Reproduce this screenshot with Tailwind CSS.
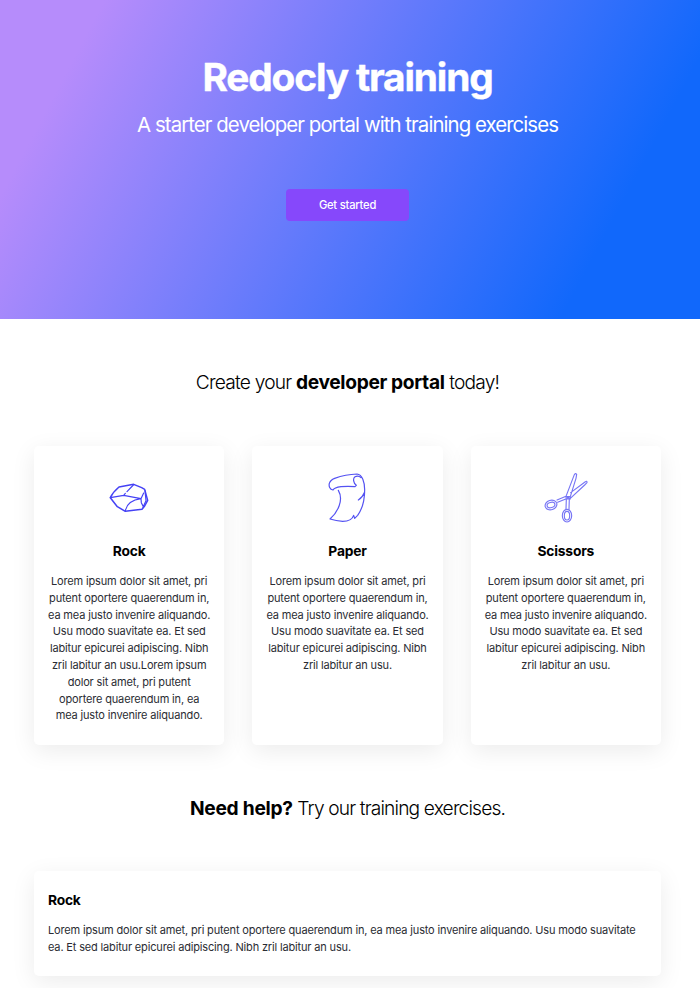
<!DOCTYPE html>
<html lang="en">
<head>
<meta charset="utf-8">
<title>Redocly training</title>
<script src="https://cdn.jsdelivr.net/npm/@tailwindcss/browser@4"></script>
</head>
<body class="h-[988px] overflow-hidden bg-white font-['Inter',sans-serif] text-black">
<header class="flex h-[319px] flex-col items-center bg-[linear-gradient(118deg,#b68cfb_12%,#1168fb_84%)] pr-[5px] pt-[53px] text-white">
  <h1 class="whitespace-nowrap text-[38.8px] font-bold leading-[48px] tracking-[-1.15px] [-webkit-text-stroke:0.4px_white]">Redocly training</h1>
  <p class="mt-[9px] whitespace-nowrap text-[20.4px] leading-[30px] tracking-[-0.93px]">A starter developer portal with training exercises</p>
  <a class="mt-[49px] flex h-[32px] w-[123px] items-center justify-center rounded-[4px] bg-[#8648fb] text-[11.2px] font-medium tracking-[-0.22px]">Get started</a>
</header>
<main class="pl-[34px] pr-[39px]">
  <h2 class="mt-[48px] whitespace-nowrap text-center text-[19.2px] font-light leading-[30px] tracking-[-0.8px]">Create your <b class="font-bold tracking-[-0.35px]">developer portal</b> today!</h2>
  <section class="mt-[48.6px] grid grid-cols-3 gap-[28px]">
    <article class="flex h-[299px] flex-col items-center rounded-[5px] bg-white pt-[18px] text-center shadow-[0_6px_24px_rgba(0,0,0,0.08)]">
      <svg class="h-[66px] w-[60px]" viewBox="0 0 180 198" fill="none" stroke="#4542f5" stroke-width="3.5" stroke-linejoin="round" stroke-linecap="round"><path d="M34 101 Q42 84 60 69L104 61 128 71 137 76 146 109 137 126 129 136 79 142 55 128Z" stroke-width="4.5"/><path d="M34 101 74 94 126 104 134 87M74 94 79 88M84 83 103 63M126 104Q84 110 79 141M126 104 127 116 133 128M138 80 141 110 132 130"/></svg>
      <h3 class="mt-[11px] text-[13.8px] font-bold leading-[20px] tracking-[-0.2px]">Rock</h3>
      <p class="mt-[12.4px] whitespace-nowrap text-[11px] leading-[16.8px] tracking-[-0.16px] text-[#2a2c33]">Lorem ipsum dolor sit amet, pri<br>putent oportere quaerendum in,<br>ea mea justo invenire aliquando.<br>Usu modo suavitate ea. Et sed<br>labitur epicurei adipiscing. Nibh<br>zril labitur an usu.Lorem ipsum<br>dolor sit amet, pri putent<br>oportere quaerendum in, ea<br>mea justo invenire aliquando.</p>
    </article>
    <article class="flex h-[299px] flex-col items-center rounded-[5px] bg-white pt-[18px] text-center shadow-[0_6px_24px_rgba(0,0,0,0.08)]">
      <svg class="h-[66px] w-[60px]" viewBox="0 0 180 198" fill="none" stroke="#5452f2" stroke-width="3.6" stroke-linejoin="round" stroke-linecap="round"><path d="M48 78C38 76 35 66 37 58Q40 48 53 43Q86 31 120 30C136 31 143 55 143 77C143 103 137 133 122 154L113 163 110 154Q104 172 77 172Q57 171 39 165C62 145 81 108 64 79M48 78C53 68 85 65 114 68L118 64C109 58 107 43 114 38Q124 33 132 41M143 84Q137 100 124 108"/></svg>
      <h3 class="mt-[11px] text-[13.8px] font-bold leading-[20px] tracking-[-0.2px]">Paper</h3>
      <p class="mt-[12.4px] whitespace-nowrap text-[11px] leading-[16.8px] tracking-[-0.16px] text-[#2a2c33]">Lorem ipsum dolor sit amet, pri<br>putent oportere quaerendum in,<br>ea mea justo invenire aliquando.<br>Usu modo suavitate ea. Et sed<br>labitur epicurei adipiscing. Nibh<br>zril labitur an usu.</p>
    </article>
    <article class="flex h-[299px] flex-col items-center rounded-[5px] bg-white pt-[18px] text-center shadow-[0_6px_24px_rgba(0,0,0,0.08)]">
      <svg class="h-[66px] w-[60px]" viewBox="0 0 180 198" fill="none" stroke="#7775f5" stroke-width="3.4" stroke-linejoin="round" stroke-linecap="round"><path d="M90 97 115 32Q118 26 122 31L120 43 102 101M104 86 147 54Q154 49 153 56L146 63 103 103M90 97 63 108M91 104 65 115M91 105 90 135M100 103 99 136M90 97 102 98 103 105 91 105Z"/><ellipse cx="45" cy="123" rx="18" ry="14" transform="rotate(-18 45 123)"/><ellipse cx="45" cy="123" rx="12" ry="8" transform="rotate(-18 45 123)"/><ellipse cx="93" cy="155" rx="14" ry="19"/><ellipse cx="93" cy="155" rx="8" ry="13"/><circle cx="96" cy="101" r="2"/></svg>
      <h3 class="mt-[11px] text-[13.8px] font-bold leading-[20px] tracking-[-0.2px]">Scissors</h3>
      <p class="mt-[12.4px] whitespace-nowrap text-[11px] leading-[16.8px] tracking-[-0.16px] text-[#2a2c33]">Lorem ipsum dolor sit amet, pri<br>putent oportere quaerendum in,<br>ea mea justo invenire aliquando.<br>Usu modo suavitate ea. Et sed<br>labitur epicurei adipiscing. Nibh<br>zril labitur an usu.</p>
    </article>
  </section>
  <h2 class="mt-[48.9px] whitespace-nowrap text-center text-[19.2px] font-light leading-[30px] tracking-[-0.85px]"><b class="font-bold tracking-[-0.27px]">Need help?</b> Try our training exercises.</h2>
  <article class="mt-[47.5px] h-[105px] rounded-[5px] bg-white px-[14px] pt-[19px] shadow-[0_6px_24px_rgba(0,0,0,0.08)]">
    <h3 class="text-[13.8px] font-bold leading-[20px] tracking-[-0.2px]">Rock</h3>
    <p class="mt-[12.4px] whitespace-nowrap text-[11px] leading-[16.8px] tracking-[-0.16px] text-[#2a2c33]">Lorem ipsum dolor sit amet, pri putent oportere quaerendum in, ea mea justo invenire aliquando. Usu modo suavitate<br>ea. Et sed labitur epicurei adipiscing. Nibh zril labitur an usu.</p>
  </article>
</main>
</body>
</html>
